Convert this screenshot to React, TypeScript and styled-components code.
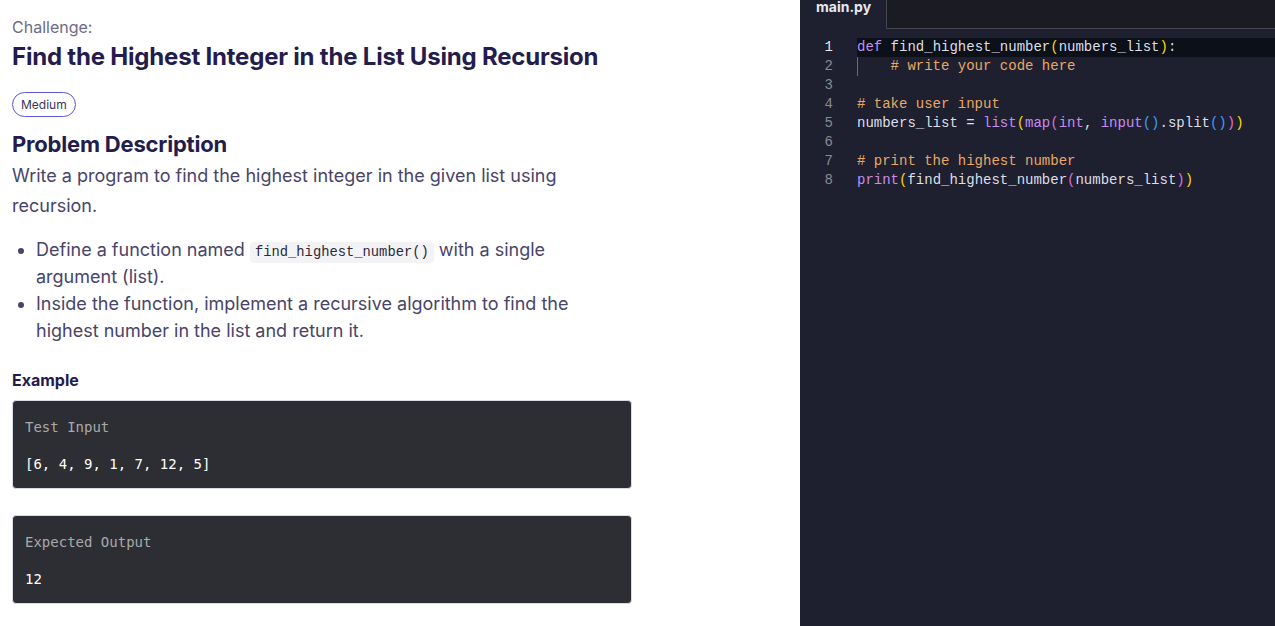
import React from "react";
import styled, { createGlobalStyle } from "styled-components";

const Global = createGlobalStyle`
  html, body { margin: 0; padding: 0; height: 100%; }
  body { font-family: Inter, "Noto Sans", sans-serif; background: #fff; }
  #root { height: 100%; }
`;

const Page = styled.div`
  display: flex;
  width: 1275px;
  height: 626px;
  overflow: hidden;
`;

const Left = styled.div`
  width: 800px;
  flex: none;
  padding: 16px 12px 0 12px;
  box-sizing: border-box;
  color: #231c4d;
`;

const Kicker = styled.div`
  font-size: 16px;
  line-height: 22px;
  color: #6d6a87;
`;

const Title = styled.h1`
  margin: 4px 0 0;
  font-size: 24px;
  line-height: 30px;
  font-weight: 700;
  letter-spacing: -0.2px;
  color: #231c4d;
`;

const Badge = styled.span`
  display: inline-flex;
  align-items: center;
  margin-top: 20px;
  height: 25px;
  padding: 0 8px;
  box-sizing: border-box;
  border: 1px solid #5a55e6;
  border-radius: 13px;
  font-size: 12px;
  color: #3a3458;
`;

const SectionTitle = styled.h2`
  margin: 13px 0 0;
  font-size: 22px;
  line-height: 28px;
  font-weight: 700;
  letter-spacing: -0.2px;
  color: #231c4d;
`;

const Para = styled.p`
  margin: 3px 0 0;
  width: 620px;
  font-size: 18px;
  line-height: 30px;
  color: #48446a;
`;

const List = styled.ul`
  margin: 15px 0 0;
  padding-left: 24px;
  width: 570px;
  font-size: 18px;
  line-height: 27px;
  color: #48446a;
`;

const Code = styled.code`
  font-family: "Liberation Mono", "DejaVu Sans Mono", monospace;
  font-size: 13.8px;
  line-height: 1;
  background: #f3f3f6;
  color: #2a2a3a;
  padding: 3px 5px;
  border-radius: 4px;
`;

const SubTitle = styled.h3`
  margin: 25px 0 0;
  font-size: 16px;
  line-height: 22px;
  font-weight: 700;
  color: #231c4d;
`;

const Box = styled.div<{ $first?: boolean }>`
  margin-top: ${(p) => (p.$first ? "9px" : "26px")};
  width: 620px;
  height: 89px;
  box-sizing: border-box;
  background: #2d2e33;
  border: 1px solid #d7dbe2;
  border-radius: 4px;
  padding: 17px 12px 0;
  font-family: "DejaVu Sans Mono", monospace;
  font-size: 14px;
`;

const BoxLabel = styled.div`
  color: #a9a9ab;
  line-height: 18px;
`;

const BoxValue = styled.div`
  margin-top: 19px;
  color: #ffffff;
  line-height: 18px;
`;

const Editor = styled.div`
  flex: 1;
  background: #1e2030;
  display: flex;
  flex-direction: column;
`;

const TabBar = styled.div`
  display: flex;
  height: 29px;
`;

const Tab = styled.div`
  width: 86px;
  padding-left: 16px;
  box-sizing: border-box;
  font-family: Inter, "Noto Sans", sans-serif;
  font-weight: 700;
  font-size: 14px;
  line-height: 14px;
  color: #e8e8ee;
`;

const TabFill = styled.div`
  flex: 1;
  background: #1b1c23;
  border-left: 1px solid #45464e;
  border-bottom: 1px solid #45464e;
`;

const Lines = styled.div`
  padding-top: 9px;
  font-family: "Liberation Mono", "DejaVu Sans Mono", monospace;
  font-size: 14px;
`;

const Line = styled.div`
  display: flex;
  height: 19px;
  line-height: 19px;
  white-space: pre;
`;

const Num = styled.span<{ $active?: boolean }>`
  width: 33px;
  flex: none;
  text-align: right;
  color: ${(p) => (p.$active ? "#e6e6e6" : "#8a8a90")};
`;

const Text = styled.span<{ $active?: boolean }>`
  flex: 1;
  margin-left: 24px;
  color: #dcdfe8;
  background: ${(p) => (p.$active ? "#0b1019" : "transparent")};
  position: relative;
`;

const Guide = styled.span`
  position: absolute;
  left: 0;
  top: 0;
  bottom: 0;
  border-left: 1px solid #6a6c78;
`;

const K = styled.span`color: #c48df0;`;
const Cm = styled.span`color: #e8a866;`;
const Y = styled.span`color: #ffd700;`;
const M = styled.span`color: #da70d6;`;
const B = styled.span`color: #3b9cff;`;

const code: React.ReactNode[] = [
  <>
    <K>def</K> find_highest_number<Y>(</Y>numbers_list<Y>)</Y>:
  </>,
  <>
    <Guide />
    {"    "}
    <Cm># write your code here</Cm>
  </>,
  <></>,
  <Cm># take user input</Cm>,
  <>
    numbers_list = <K>list</K>
    <Y>(</Y>
    <K>map</K>
    <M>(</M>
    <K>int</K>, <K>input</K>
    <B>()</B>.split<B>()</B>
    <M>)</M>
    <Y>)</Y>
  </>,
  <></>,
  <Cm># print the highest number</Cm>,
  <>
    <K>print</K>
    <Y>(</Y>find_highest_number<M>(</M>numbers_list<M>)</M>
    <Y>)</Y>
  </>,
];

export default function App() {
  return (
    <>
      <Global />
      <Page>
        <Left>
          <Kicker>Challenge:</Kicker>
          <Title>Find the Highest Integer in the List Using Recursion</Title>
          <Badge>Medium</Badge>
          <SectionTitle>Problem Description</SectionTitle>
          <Para>
            Write a program to find the highest integer in the given list using
            recursion.
          </Para>
          <List>
            <li>
              Define a function named <Code>find_highest_number()</Code> with a
              single argument (list).
            </li>
            <li>
              Inside the function, implement a recursive algorithm to find the
              highest number in the list and return it.
            </li>
          </List>
          <SubTitle>Example</SubTitle>
          <Box $first>
            <BoxLabel>Test Input</BoxLabel>
            <BoxValue>[6, 4, 9, 1, 7, 12, 5]</BoxValue>
          </Box>
          <Box>
            <BoxLabel>Expected Output</BoxLabel>
            <BoxValue>12</BoxValue>
          </Box>
        </Left>
        <Editor>
          <TabBar>
            <Tab>main.py</Tab>
            <TabFill />
          </TabBar>
          <Lines>
            {code.map((c, i) => (
              <Line key={i}>
                <Num $active={i === 0}>{i + 1}</Num>
                <Text $active={i === 0}>{c}</Text>
              </Line>
            ))}
          </Lines>
        </Editor>
      </Page>
    </>
  );
}
